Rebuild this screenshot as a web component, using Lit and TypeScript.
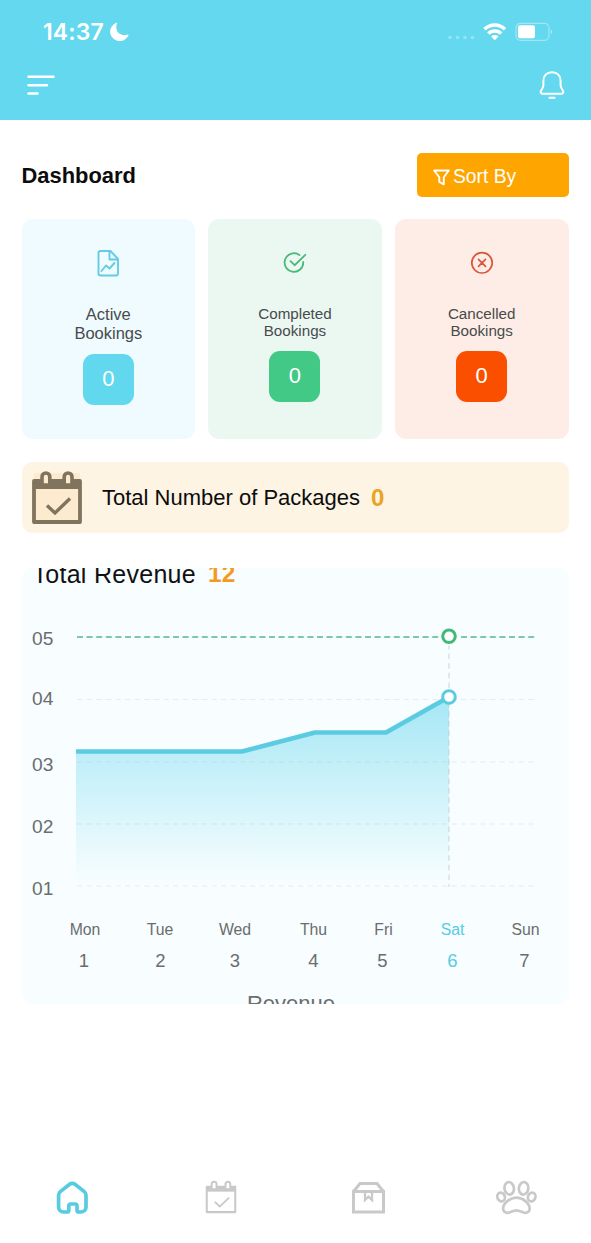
import { LitElement, html, css, svg } from "lit";
import { customElement } from "lit/decorators.js";

const calendar = (sw: number) => svg`
  <path d="M2 10h46v41H2z" fill="none" stroke="currentColor" stroke-width=${sw} stroke-linejoin="round"/>
  <path d="M2 9h46v9H2z" fill="currentColor"/>
  <path class="loop" d="M10 14V5.900a3.900 3.900 0 0 1 7.800 0V14zM32.200 14V5.900a3.900 3.900 0 0 1 7.800 0V14z" stroke="currentColor" stroke-width=${sw * 0.95}/>
  <path d="M15 34.500l8 7.500 15-14.500" fill="none" stroke="currentColor" stroke-width=${sw * 0.9}/>
`;

@customElement("status-bar")
class StatusBar extends LitElement {
  static styles = css`
    :host { display: flex; height: 64px; padding: 0 38px 0 43px; box-sizing: border-box; align-items: center; justify-content: space-between; color: #fff; }
    .left, .right { display: flex; align-items: center; }
    .time { font: 600 23px/28px Inter, sans-serif; letter-spacing: 0.1px; }
    .moon { margin-left: 5px; }
  `;
  render() {
    return html`
      <div class="left">
        <span class="time">14:37</span>
        <svg class="moon" width="21" height="20" viewBox="0 0 21 20"><path d="M7.500 1C1 4 .2 11 3.500 15.200 8 20.500 16.500 19.500 19.200 13 11 15.500 4.500 9.500 7.500 1Z" fill="#fff" stroke="#fff" stroke-linejoin="round"/></svg>
      </div>
      <div class="right">
        <svg width="106" height="24" viewBox="0 0 106 24">
          <g fill="#fff" opacity=".32"><circle cx="3" cy="17.500" r="1.800"/><circle cx="10.500" cy="17.500" r="1.800"/><circle cx="18" cy="17.500" r="1.800"/><circle cx="25.500" cy="17.500" r="1.800"/></g>
          <g fill="none" stroke="#fff" stroke-width="3.500"><path d="M37.500 9.200a14.600 14.600 0 0 1 20.500 0"/><path d="M41.300 13.600a9.200 9.200 0 0 1 12.900 0"/></g>
          <path d="M47.750 20.300l-3.700-3.800a5.400 5.400 0 0 1 7.400 0z" fill="#fff"/>
          <rect x="69" y="3.300" width="33" height="17" rx="4.500" fill="none" stroke="#fff" opacity=".4" stroke-width="1.200"/>
          <rect x="71" y="5.300" width="17" height="13" rx="2" fill="#fff"/>
          <path d="M103.800 9v5.500q2.500-2.750 0-5.500" fill="#fff" opacity=".5"/>
        </svg>
      </div>`;
  }
}

@customElement("booking-card")
class BookingCard extends LitElement {
  static properties = { kind: { type: String }, label: { type: String }, count: { type: Number } };
  declare kind: string;
  declare label: string;
  declare count: number;
  static styles = css`
    :host { display: block; }
    .card { height: 220px; box-sizing: border-box; border-radius: 11px; display: flex; flex-direction: column; align-items: center; padding-top: 28px; text-align: center; }
    .active { background: #effbfe; color: #62cde2; }
    .completed { background: #ebf8f2; color: #4ab978; }
    .cancelled { background: #feede6; color: #d9573a; }
    .icon { display: block; width: 32px; height: 32px; }
    .label { color: #484b4c; font-size: 15.200px; line-height: 17px; width: 90px; margin-top: 26px; }
    .active .label { font-size: 16.500px; line-height: 19px; }
    .count { margin-top: 11.500px; width: 51px; height: 51px; border-radius: 11px; display: grid; place-items: center; color: #fff; font-size: 22px; }
    .active .count { background: #61d8ed; margin-top: 10.500px; }
    .completed .count { background: #42c986; }
    .cancelled .count { background: #fb4f00; }
  `;
  icon() {
    if (this.kind === "active")
      return svg`<g fill="none" stroke="currentColor" stroke-width="1.900" stroke-linejoin="round"><path d="M8.500 4h10l7.500 8v14.500a2 2 0 0 1-2 2H8.500a2 2 0 0 1-2-2v-20.500a2 2 0 0 1 2-2z"/><path d="M17.500 4v8.500H26"/><path d="M9.500 24l4.500-5.500 3.500 3 5-5.500" stroke-linecap="round"/></g>`;
    if (this.kind === "completed")
      return svg`<g fill="none" stroke="currentColor" stroke-width="1.800" stroke-linecap="round"><path d="M20.500 8.100A9.300 9.300 0 1 0 24.200 15"/><path d="M11.500 14.200l4.200 4L26.300 7.800"/></g>`;
    return svg`<g fill="none" stroke="currentColor" stroke-width="1.700" stroke-linecap="round"><circle cx="16" cy="15.800" r="10.200"/><path d="M12.500 12.300l7 7m0-7l-7 7"/></g>`;
  }
  render() {
    return html`<div class="card ${this.kind}">
      <svg class="icon" viewBox="0 0 32 32">${this.icon()}</svg>
      <div class="label">${this.label} Bookings</div>
      <div class="count">${this.count}</div>
    </div>`;
  }
}

@customElement("revenue-chart")
class RevenueChart extends LitElement {
  static styles = css`
    :host { display: block; height: 436px; border-radius: 11px; background: #f8fdff; overflow: hidden; }
    .title { margin: -8px 0 0 11px; height: 28px; font-size: 25px; letter-spacing: 0.28px; line-height: 28px; color: #111; white-space: nowrap; display: flex; }
    .value { color: #f39a1f; font-weight: 700; margin-left: 12px; font-size: 24.400px; }
    .plot { display: block; font-family: "Liberation Sans", Arial, sans-serif; fill: #6a6d6e; }
    .level { font-size: 19.200px; }
    .day { font-size: 15.800px; text-anchor: middle; }
    .date { font-size: 18.500px; text-anchor: middle; }
    .current { fill: #56cde2; }
    .caption { font-size: 22px; line-height: 26px; color: #6a6d6e; text-align: center; padding-right: 8px; }
  `;
  render() {
    const levels: [string, number][] = [["05", 644.500], ["04", 705], ["03", 770.500], ["02", 832.500], ["01", 895]];
    const days: [string, number, number][] = [["Mon", 85, 84], ["Tue", 160, 160.500], ["Wed", 235, 235], ["Thu", 313.500, 313.500], ["Fri", 383.500, 382.500], ["Sat", 452.500, 452.500], ["Sun", 525.500, 524.500]];
    return html`
      <div class="title"><span>Total Revenue</span><span class="value">12</span></div>
      <svg class="plot" width="547" height="403" viewBox="22 588 547 403">
        <defs><linearGradient id="area" x1="0" y1="697" x2="0" y2="888" gradientUnits="userSpaceOnUse">
          <stop offset="0" stop-color="#a5e7f5"/><stop offset="1" stop-color="#fafeff"/>
        </linearGradient></defs>
        <path d="M76 751H242L315 732H386L449 697V887H76Z" fill="url(#area)"/>
        <g stroke="#8ba3aa" stroke-opacity=".17" stroke-width="1.200" stroke-dasharray="5.500 4.100">
          ${[699.500, 762, 824, 886].map((y) => svg`<path d="M77 ${y}H535"/>`)}
        </g>
        <path d="M449 644V887" stroke="#b9c7cb" stroke-opacity=".55" stroke-width="1.400" stroke-dasharray="5.500 4.100"/>
        <path d="M77 637H535" stroke="#55b58b" stroke-width="1.600" stroke-dasharray="6 3.600"/>
        <path d="M76 751.500H242L315 732.500H386L449 697" fill="none" stroke="#5bcbe2" stroke-width="4.600" stroke-linejoin="round"/>
        <circle cx="449" cy="636.300" r="9.500" fill="#f8fdff"/>
        <circle cx="449" cy="636.300" r="6.300" fill="#fff" stroke="#43b979" stroke-width="3"/>
        <circle cx="449" cy="697" r="6.300" fill="#fff" stroke="#5bcbe2" stroke-width="3"/>
        ${levels.map(([t, y]) => svg`<text class="level" x="32" y=${y}>${t}</text>`)}
        ${days.map(([d, x, nx], i) => svg`
          <text class="day ${d === "Sat" ? "current" : ""}" x=${x} y="935">${d}</text>
          <text class="date ${d === "Sat" ? "current" : ""}" x=${nx} y="967">${i + 1}</text>`)}
      </svg>
      <div class="caption">Revenue</div>`;
  }
}

@customElement("tab-bar")
class TabBar extends LitElement {
  static styles = css`
    :host { display: grid; grid-template-columns: repeat(4, 1fr); height: 90px; box-sizing: border-box; padding: 23px 0 0; color: #c9c9c9; }
    .tab { display: flex; justify-content: center; }
    .home { color: #57cce1; }
    .icon { width: 44px; height: 44px; display: block; }
    .loop { fill: #fff; }
  `;
  render() {
    return html`
      <div class="tab home"><svg class="icon" viewBox="0 0 44 44"><path d="M19.300 8.300a4.500 4.500 0 0 1 5.400 0L34 15.600a4.500 4.500 0 0 1 1.700 3.500V31a5 5 0 0 1-5 5h-2.200a1.800 1.800 0 0 1-1.800-1.800V30q0-2-2-2h-4.200q-2 0-2 2v4.200a1.800 1.800 0 0 1-1.800 1.800h-3.400a5 5 0 0 1-5-5V19.100a4.500 4.500 0 0 1 1.700-3.500z" transform="translate(-1.700 0)" fill="none" stroke="currentColor" stroke-width="3.700" stroke-linejoin="round"/></svg></div>
      <div class="tab"><svg class="icon" viewBox="0 0 44 44"><g transform="translate(5.500 4.500) scale(.62)">${calendar(3.300)}</g></svg></div>
      <div class="tab"><svg class="icon" viewBox="0 0 44 44"><g fill="none" stroke="currentColor" stroke-width="3"><path d="M6.500 15.500h30V36h-30zM6.500 15.500l6.500-8h17l6.500 8"/><path d="M18 15.500v8.500l3.500-3.300 3.500 3.300v-8.500" stroke-width="2.300"/></g></svg></div>
      <div class="tab"><svg class="icon" viewBox="0 0 44 44"><g transform="translate(-.6 0)" fill="none" stroke="currentColor" stroke-width="2.700">
        <ellipse cx="14.800" cy="12.300" rx="4.700" ry="6.300" transform="rotate(-8 14.800 12.300)"/><ellipse cx="29.200" cy="12.300" rx="4.700" ry="6.300" transform="rotate(8 29.200 12.300)"/>
        <ellipse cx="6.700" cy="21" rx="3.700" ry="4.400" transform="rotate(-25 6.700 21)"/><ellipse cx="37.300" cy="21" rx="3.700" ry="4.400" transform="rotate(25 37.300 21)"/>
        <path d="M22 21.700c-6.500 0-13.300 5.600-13.300 10.900 0 2.700 2 4.500 4.700 4.300 2.500-.2 5.300-2.500 8.600-2.500s6.100 2.300 8.600 2.500c2.700.2 4.700-1.600 4.700-4.300 0-5.300-6.800-10.900-13.300-10.900z"/></g></svg></div>`;
  }
}

@customElement("app-root")
class AppRoot extends LitElement {
  static styles = css`
    :host { display: flex; flex-direction: column; height: 1243px; background: #fff; font-family: "Liberation Sans", Arial, sans-serif; color: #0c0c0c; overflow: hidden; }
    .header { height: 120px; background: #63d8ee; flex: none; }
    .toolbar { display: flex; justify-content: space-between; align-items: center; padding: 5px 24px 0 27px; }
    .main { flex: 1; padding: 33px 22.500px 0 21.500px; display: flex; flex-direction: column; }
    .heading { display: flex; justify-content: space-between; align-items: center; height: 44px; }
    .title { margin: 0; padding-top: 1px; font-size: 21.900px; font-weight: 700; line-height: 26px; }
    .sort { width: 152px; height: 44px; box-sizing: border-box; border: 0; border-radius: 5px; background: #ffa500; color: #fff; display: flex; align-items: center; gap: 3.500px; padding: 4px 0 0 16px; font: 19.300px/24px "Liberation Sans", Arial, sans-serif; }
    .cards { display: grid; grid-template-columns: repeat(3, 1fr); gap: 13px; margin-top: 22px; }
    .packages { margin-top: 23px; height: 71px; border-radius: 10px; background: #fef4e3; display: flex; align-items: center; font-size: 22px; white-space: nowrap; }
    .calendar { color: #81745f; margin: 1px 20px 0 10.500px; }
    .loop { fill: #fdebcf; }
    .total { color: #e9a51f; font-size: 24px; font-weight: 700; margin-left: 11px; }
    .chart { margin-top: 35px; }
  `;
  render() {
    return html`
      <div class="header">
        <status-bar></status-bar>
        <div class="toolbar">
          <svg width="30" height="30" viewBox="0 0 30 30"><path d="M1.500 6.700h25M1.500 15.200h18.500M1.500 23.500h9" stroke="#fff" stroke-width="2.500" stroke-linecap="round"/></svg>
          <svg width="30" height="32" viewBox="0 0 30 32"><g fill="none" stroke="#fff" stroke-width="2" stroke-linecap="round"><path d="M15 3.200c-5.400 0-8.600 3.600-8.600 8.800v4.300c0 1.500-.4 2.500-1.300 3.700l-1 1.500c-1 1.600-.2 3.300 1.800 3.300h18.200c2 0 2.800-1.700 1.800-3.300l-1-1.500c-.9-1.200-1.300-2.200-1.300-3.700V12c0-5.200-3.200-8.800-8.600-8.800z"/><path d="M12.400 28.800h5.200"/></g></svg>
        </div>
      </div>
      <div class="main">
        <div class="heading">
          <h1 class="title">Dashboard</h1>
          <button class="sort"><svg width="17" height="17" viewBox="0 0 17 17"><path d="M1.200 1.500h14.600l-5 6.800v7l-4.500-2.400V8.300z" fill="none" stroke="#fff" stroke-width="1.900" stroke-linejoin="round"/></svg><span>Sort By</span></button>
        </div>
        <div class="cards">
          <booking-card kind="active" label="Active" .count=${0}></booking-card>
          <booking-card kind="completed" label="Completed" .count=${0}></booking-card>
          <booking-card kind="cancelled" label="Cancelled" .count=${0}></booking-card>
        </div>
        <div class="packages">
          <svg class="calendar" width="50" height="54" viewBox="0 0 50 54"><path d="M2 2h46v50H2z" fill="#fdebcf"/>${calendar(3.800)}</svg>
          <span>Total Number of Packages</span><span class="total">0</span>
        </div>
        <revenue-chart class="chart"></revenue-chart>
      </div>
      <tab-bar></tab-bar>`;
  }
}
